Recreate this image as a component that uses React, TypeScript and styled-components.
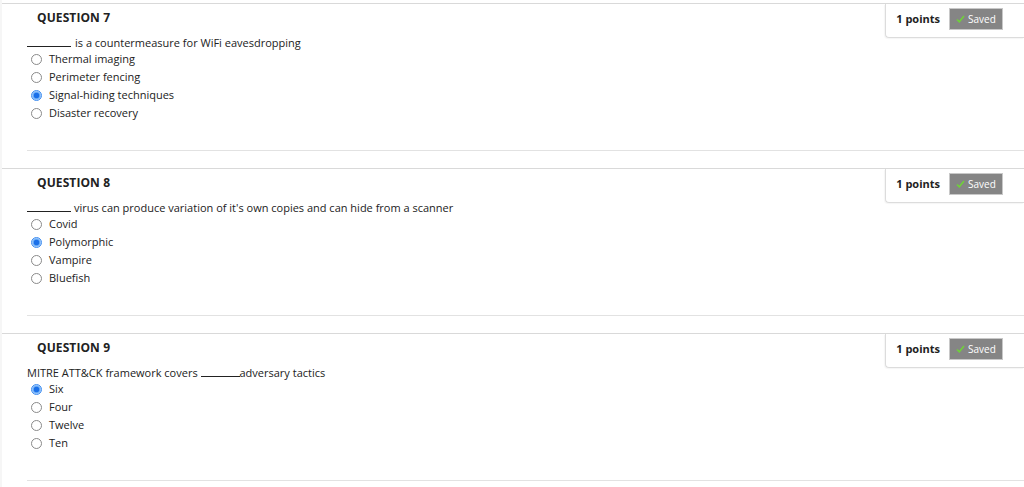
import React from 'react';
import styled, { createGlobalStyle } from 'styled-components';

const GlobalStyle = createGlobalStyle`
    body {
        margin: 0;
        background: #fff;
        font-family: "Open Sans", "DejaVu Sans", sans-serif;
        color: #222;
    }
`;

const Page = styled.div`
    padding-top: 3px;
    border-left: 2px solid #f6f6f6;
    min-height: 484px;
`;

const Block = styled.section`
    border-top: 1px solid #d9d9d9;
    padding-left: 25px;
`;

const HeaderRow = styled.div`
    display: flex;
    justify-content: space-between;
    align-items: flex-start;
    height: 32px;
`;

const Title = styled.h3`
    margin: 7px 0 0 10px;
    font-size: 12px;
    line-height: 14px;
    font-weight: 700;
    color: #222;
    letter-spacing: 0.1px;
`;

const PointsBox = styled.div`
    display: flex;
    align-items: center;
    height: 34px;
    padding: 0 21px 0 10px;
    border-left: 1px solid #dcdcdc;
    border-bottom: 1px solid #dcdcdc;
    border-bottom-left-radius: 4px;
    box-sizing: border-box;
    box-shadow: -1px 1px 1px rgba(0, 0, 0, 0.04);
    background: #fff;
`;

const Points = styled.span`
    font-size: 11px;
    font-weight: 700;
    color: #222;
    margin-right: 9px;
    margin-top: -5px;
`;

const SavedBadge = styled.span`
    display: flex;
    align-items: center;
    gap: 3px;
    width: 54px;
    height: 22px;
    box-sizing: border-box;
    padding-left: 6px;
    margin-top: -3px;
    background: #858585;
    border: 1px solid #c8c8c8;
    color: #fff;
    font-size: 10px;
`;

const Prompt = styled.div`
    font-size: 11px;
    line-height: 12px;
    height: 12px;
    color: #222;
`;

const Blank = styled.span<{ $w: number; $gap?: number }>`
    display: inline-block;
    width: ${({ $w }) => $w}px;
    border-bottom: 1px solid #222;
    height: 10px;
    margin-right: ${({ $gap }) => $gap ?? 0}px;
`;

const Options = styled.ul`
    list-style: none;
    margin: 1px 0 0 0;
    padding: 0;
`;

const Option = styled.li`
    display: flex;
    align-items: center;
    height: 18px;
    font-size: 11px;
    color: #222;
`;

const Radio = styled.span<{ $checked?: boolean }>`
    width: 11px;
    height: 11px;
    margin-left: 4px;
    margin-right: 7px;
    margin-top: 2px;
    border-radius: 50%;
    box-sizing: border-box;
    border: 1px solid ${({ $checked }) => ($checked ? '#3d8cf0' : '#8a8a8a')};
    background: ${({ $checked }) =>
        $checked ? 'radial-gradient(circle, #1a6fe8 0 2.6px, #5aa3f7 3px, #cfe3fc 5px)' : '#fff'};
    flex-shrink: 0;
`;

const Divider = styled.hr`
    margin: 29px 0 17px 0;
    border: none;
    border-top: 1px solid #e2e2e2;
    height: 0;
`;

type Question = {
    number: number;
    prompt: React.ReactNode;
    options: string[];
    selected: number;
};

const questions: Question[] = [
    {
        number: 7,
        prompt: (
            <>
                <Blank $w={44} $gap={4} />is a countermeasure for WiFi eavesdropping
            </>
        ),
        options: ['Thermal imaging', 'Perimeter fencing', 'Signal-hiding techniques', 'Disaster recovery'],
        selected: 2,
    },
    {
        number: 8,
        prompt: (
            <>
                <Blank $w={44} $gap={3} />virus can produce variation of it's own copies and can hide from a scanner
            </>
        ),
        options: ['Covid', 'Polymorphic', 'Vampire', 'Bluefish'],
        selected: 1,
    },
    {
        number: 9,
        prompt: (
            <>
                MITRE ATT&amp;CK framework covers <Blank $w={39} />adversary tactics
            </>
        ),
        options: ['Six', 'Four', 'Twelve', 'Ten'],
        selected: 0,
    },
];

const Check = () => (
    <svg width="9" height="8" viewBox="0 0 9 8">
        <path d="M1 4.5 L3.3 6.8 L8 1" fill="none" stroke="#6fd13a" strokeWidth="1.6" />
    </svg>
);

const App = () => (
    <Page>
        <GlobalStyle />
        {questions.map((q) => (
            <Block key={q.number}>
                <HeaderRow>
                    <Title>QUESTION {q.number}</Title>
                    <PointsBox>
                        <Points>1 points</Points>
                        <SavedBadge>
                            <Check />
                            Saved
                        </SavedBadge>
                    </PointsBox>
                </HeaderRow>
                <Prompt>{q.prompt}</Prompt>
                <Options>
                    {q.options.map((opt, i) => (
                        <Option key={opt}>
                            <Radio $checked={i === q.selected} />
                            {opt}
                        </Option>
                    ))}
                </Options>
                <Divider />
            </Block>
        ))}
    </Page>
);

export default App;
